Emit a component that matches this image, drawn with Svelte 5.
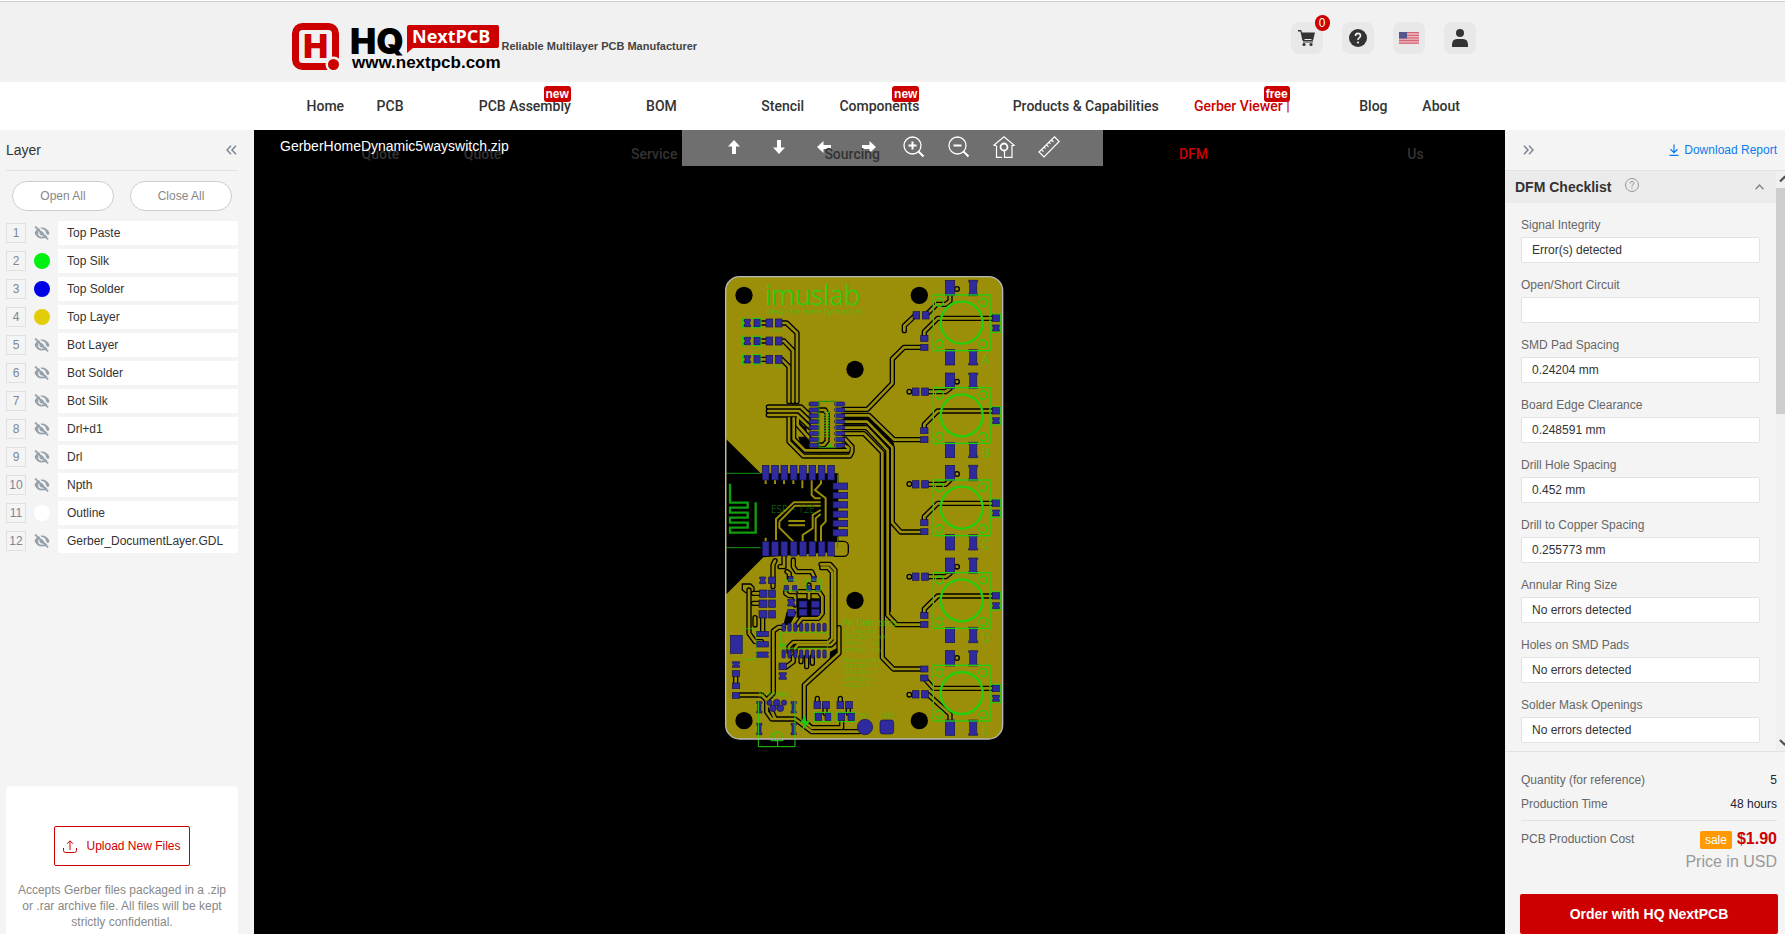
<script>
    let layers = [
        { name: 'Top Paste' },
        { name: 'Top Silk', color: '#00f010' },
        { name: 'Top Solder', color: '#0000e6' },
        { name: 'Top Layer', color: '#e3cd09' },
        { name: 'Bot Layer' },
        { name: 'Bot Solder' },
        { name: 'Bot Silk' },
        { name: 'Drl+d1' },
        { name: 'Drl' },
        { name: 'Npth' },
        { name: 'Outline', color: '#ffffff' },
        { name: 'Gerber_DocumentLayer.GDL' }
    ];

    let menu = [
        { first: 'Home' },
        { first: 'PCB', second: 'Quote' },
        { first: 'PCB Assembly', second: 'Quote', tag: 'new' },
        { first: 'BOM', second: 'Service' },
        { first: 'Stencil' },
        { first: 'Components', second: 'Sourcing', tag: 'new' },
        { first: 'Products & Capabilities' },
        { first: 'Gerber Viewer |', second: 'DFM', tag: 'free', active: true },
        { first: 'Blog' },
        { first: 'About', second: 'Us' }
    ];

    let checks = [
        { label: 'Signal Integrity', value: 'Error(s) detected' },
        { label: 'Open/Short Circuit', value: '' },
        { label: 'SMD Pad Spacing', value: '0.24204 mm' },
        { label: 'Board Edge Clearance', value: '0.248591 mm' },
        { label: 'Drill Hole Spacing', value: '0.452 mm' },
        { label: 'Drill to Copper Spacing', value: '0.255773 mm' },
        { label: 'Annular Ring Size', value: 'No errors detected' },
        { label: 'Holes on SMD Pads', value: 'No errors detected' },
        { label: 'Solder Mask Openings', value: 'No errors detected' }
    ];

    // board drawing, 3 units per screen pixel
    const holes = [[87, 91], [613, 91], [420, 313], [420, 1006], [87, 1367], [613, 1367]];
    const keys = [
        { y: 0, name: 'A' },
        { y: 278, name: 'B' },
        { y: 555, name: 'C' },
        { y: 833, name: 'D' },
        { y: 1111, name: 'E' }
    ];
    const ledRows = [174, 228, 283];
    const eight = [0, 1, 2, 3, 4, 5, 6, 7];

    // isolated copper runs, drawn dark first and then filled
    const traces = [
        'M617 247H567L532 282V355L457 433H385',
        'M617 524H537L462 451H385',
        'M617 801H557L532 773V547L456 470H385',
        'M617 1079H545L518 1050V555L455 488H385',
        'M617 1212H535L502 1178V562L447 506H385',
        'M705 90V108L692 118H665L640 143',
        'M600 152L568 182V197',
        'M137 174H153M137 228H153M137 283H153',
        'M200 174H215L246 204V410',
        'M200 228H207L234 256V410',
        'M200 283L222 305V410',
        'M160 426H258L285 452',
        'M160 438H252L285 470',
        'M160 450H246L285 488',
        'M222 460V530L265 573H405L411 560V545L390 522',
        'M236 460V522L270 556H400V548L385 540',
        'M248 460V480L285 522',
        'M312 435H330L336 446V528L326 540H312',
        // below the module
        'M207 873V905H195',
        'M180 887L174 900V965',
        'M235 885V905L245 920H290L297 935',
        'M223 940V925L216 920',
        'M320 908H340L352 922V1120L340 1132H235L222 1145V1160',
        'M318 898H345L360 915V1128L348 1140H248L240 1150V1160',
        'M212 975V985L222 992H240V1020',
        'M252 980H312L322 995V1045L310 1060H260L245 1080',
        'M282 960V1000',
        'M102 975V1105L120 1130H140',
        'M115 985H145M115 1015H145M120 1058V1080',
        'M143 1055V1100',
        'M205 1087H190L175 1098V1285L155 1305V1340L170 1362H240L290 1400H432L450 1386',
        'M75 1290H140L155 1305L180 1360',
        'M372 1088V1165L268 1260V1370L290 1388H380V1365',
        'M62 1235V1260',
        'M235 1175V1190L215 1205H205',
        'M258 1175V1190M275 1175V1205M292 1175V1195',
        'M307 1300V1310M376 1300V1310M330 1320V1345M400 1320V1345'
    ];

    const keyTraces = [
        'M628 215V200L668 160H845',
        'M628 493V478L668 438H845',
        'M628 770V755L668 715H845',
        'M628 1048V1032L668 993H845',
        'M628 1240L655 1270H845',
        'M705 370L692 380H635',
        'M705 645L692 658H635',
        'M705 925L692 935H635',
        'M640 1289L705 1348V1365'
    ];
    const runs = [...keyTraces, ...traces];

    // [x, y, width, height]
    const pads = [
        [594, 140, 20, 22], [622, 140, 20, 22],
        [592, 369, 20, 22], [620, 369, 20, 22],
        [592, 647, 20, 22], [620, 647, 20, 22],
        [592, 924, 20, 22], [620, 924, 20, 22],
        [592, 1277, 20, 22], [620, 1277, 20, 22],
        [617, 211, 22, 18], [617, 238, 22, 18],
        [617, 488, 22, 18], [617, 515, 22, 18],
        [617, 764, 22, 18], [617, 791, 22, 18],
        [617, 1042, 22, 18], [617, 1069, 22, 18],
        [617, 1203, 22, 18], [617, 1230, 22, 18],
        [161, 936, 20, 20],
        [134, 975, 22, 22], [161, 975, 20, 22],
        [132, 1005, 24, 22], [161, 1005, 20, 22],
        [132, 1037, 24, 22], [161, 1037, 20, 22],
        [220, 934, 14, 16], [207, 962, 13, 16], [233, 962, 13, 16],
        [289, 934, 14, 16], [276, 962, 13, 16], [302, 962, 13, 16],
        [218, 1034, 22, 20],
        [252, 1008, 24, 20], [252, 1032, 24, 20],
        [289, 1008, 24, 20], [289, 1032, 24, 20],
        [46, 1111, 36, 54],
        [124, 1099, 36, 16], [124, 1130, 36, 16],
        [52, 1217, 22, 17], [52, 1254, 22, 17], [52, 1283, 22, 17],
        [192, 1194, 22, 20],
        [297, 1309, 20, 22], [323, 1309, 20, 22], [366, 1309, 20, 22], [392, 1309, 20, 22],
        [300, 1344, 20, 22], [330, 1344, 20, 22], [369, 1344, 20, 22], [399, 1344, 20, 22]
    ];

    // pads tied to the copper pour, with cut corners
    const tied = [
        [134, 936, 18, 20],
        [218, 1003, 22, 20],
        [124, 1161, 36, 16],
        [52, 1190, 22, 17],
        [192, 1223, 22, 20],
        [125, 1310, 16, 34], [228, 1310, 16, 34], [125, 1375, 16, 34], [228, 1375, 16, 34],
        ...ledRows.map((y) => [87, y - 11, 20, 22]),
        ...keys.flatMap((key) => [
            [761, key.y + 46, 27, 46],
            [761, key.y + 254, 27, 46],
            [832, key.y + 180, 22, 18]
        ])
    ];

    function cutPad([x, y, w, h]) {
        return `M${x} ${y}h${w}v5l-3 3v${h - 16}l3 3v5h-${w}v-5l3-3v-${h - 16}l-3-3z`;
    }

    const notes = [
        [1103, 'LED Strip Signal'],
        [1122, 'GPIO12(D6) -> DATA'],
        [1141, 'GPIO5(D1) -> SCL'],
        [1160, 'GPIO4(D2) -> SDA'],
        [1190, '(Button Input Pin)'],
        [1209, 'GPIO13(D7) -> A'],
        [1228, 'GPIO12(D6) -> B'],
        [1247, 'GPIO14(D5) -> C'],
        [1266, 'ADC(A0) -> E']
    ];
</script>

<div class="page">
    <header>
        <div class="container head">
            <a class="brand" href="/" aria-label="HQ NextPCB">
                <svg width="210" height="50" viewBox="0 0 210 50">
                    <rect x="3.5" y="5.500" width="40" height="40" rx="7" fill="none" stroke="#c00" stroke-width="7" />
                    <text x="23.500" y="37" class="heavy" font-size="33" text-anchor="middle" fill="#c00">H</text>
                    <circle cx="41.500" cy="43.500" r="8" fill="#f1f1f1" />
                    <circle cx="41.500" cy="43.500" r="5.500" fill="#c00" />
                    <text x="58" y="33" class="heavy" font-size="35">HQ</text>
                    <path d="M117 4h88q2 0 2 2v19q0 2-2 2h-84l-6 5V6q0-2 2-2z" fill="#c00" />
                    <text x="120" y="22" class="next" font-size="18" fill="#fff">NextPCB</text>
                    <text x="60" y="47" class="site" font-size="17">www.nextpcb.com</text>
                </svg>
                <span class="slogan">Reliable Multilayer PCB Manufacturer</span>
            </a>
            <div class="tools">
                <a class="tool" href="/cart" aria-label="Cart">
                    <svg width="18" height="18" viewBox="0 0 18 18" fill="#333">
                        <path d="M0 1h3.200l.8 2.500h13l-1.800 7.500q-.3 1-1.200 1H5.500q-1 0-1.200-1L2.400 2.400H0z" />
                        <path d="M5 13h10" stroke="#333" />
                        <circle cx="6" cy="15.500" r="1.600" /><circle cx="13" cy="15.500" r="1.600" />
                        <path d="M6.500 10.500h7" stroke="#e8e8e8" />
                    </svg>
                    <span class="count">0</span>
                </a>
                <a class="tool" href="/help" aria-label="Help">
                    <svg width="18" height="18" viewBox="0 0 18 18">
                        <circle cx="9" cy="9" r="9" fill="#333" />
                        <path d="M6.500 7q0-2.600 2.500-2.600T11.500 6.800q0 1.200-1.400 2Q9 9.500 9 11" fill="none" stroke="#f1f1f1" stroke-width="1.600" />
                        <circle cx="9" cy="13.500" r="1.100" fill="#f1f1f1" />
                    </svg>
                </a>
                <button class="tool" aria-label="Language">
                    <svg width="20" height="12" viewBox="0 0 20 12">
                        <rect width="20" height="12" fill="#e8bfc4" />
                        <path d="M0 .7h20M0 3.300h20M0 5.900h20M0 8.500h20M0 11.200h20" stroke="#d56573" stroke-width="1.300" />
                        <rect width="8" height="6.500" fill="#56568f" />
                    </svg>
                </button>
                <a class="tool" href="/account" aria-label="Account">
                    <svg width="18" height="18" viewBox="0 0 18 18" fill="#333">
                        <circle cx="9" cy="4" r="4" />
                        <path d="M1 18v-2q0-6 5-6h6q5 0 5 6v2z" />
                    </svg>
                </a>
            </div>
        </div>
    </header>

    <nav>
        <ul class="container">
            {#each menu as item}
                <li>
                    <a href="/" class:active={item.active}>
                        <span class="first">{item.first}{#if item.tag}<b class="tag">{item.tag}</b>{/if}</span>
                        {#if item.second}<span class="second">{item.second}</span>{/if}
                    </a>
                </li>
            {/each}
        </ul>
    </nav>

    <main>
        <aside class="left">
            <div class="panel-head">
                <span>Layer</span>
                <button class="plain" aria-label="Collapse layers">
                    <svg width="11" height="10" viewBox="0 0 11 10" fill="none" stroke="#7b8794" stroke-width="1.500"><path d="M5 .8L1 5l4 4.200M10 .8L6 5l4 4.200" /></svg>
                </button>
            </div>
            <div class="pills">
                <button>Open All</button>
                <button>Close All</button>
            </div>
            <ol>
                {#each layers as layer, index}
                    <li>
                        <span class="num">{index + 1}</span>
                        <button class="plain eye" aria-label="Toggle {layer.name}">
                            {#if layer.color}
                                <span class="dot" style="background:{layer.color}"></span>
                            {:else}
                                <svg width="16" height="14" viewBox="0 0 16 14" fill="none" stroke="#96a0aa">
                                    <path d="M.5 7Q3 1.500 8 1.500T15.500 7Q13 12.500 8 12.500T.5 7z" fill="#96a0aa" stroke="none" />
                                    <circle cx="8" cy="7" r="3.200" stroke="#f4f4f4" stroke-width="1.300" />
                                    <path d="M3-.7L15.500 11.800" stroke="#f4f4f4" stroke-width="1.500" />
                                    <path d="M1.200.5L14 13.300" stroke-width="1.800" />
                                </svg>
                            {/if}
                        </button>
                        <span class="layer-name">{layer.name}</span>
                    </li>
                {/each}
            </ol>
            <div class="upload">
                <button>
                    <svg width="14" height="13" viewBox="0 0 14 13" fill="none" stroke="#c00"><path d="M.5 8v2.500q0 2 2 2h9q2 0 2-2V8M7 10V1M4 3.800L7 .8l3 3" /></svg>
                    Upload New Files
                </button>
                <p>Accepts Gerber files packaged in a .zip or .rar archive file. All files will be kept strictly confidential.</p>
            </div>
        </aside>

        <section class="viewer">
            <div class="bar">
                <span class="file">GerberHomeDynamic5wayswitch.zip</span>
                <div class="actions">
                    <button class="plain" aria-label="Move up"><svg width="12" height="14" viewBox="0 0 12 14" fill="#fff"><path d="M6 0l6 6.500H8V14H4V6.500H0z" /></svg></button>
                    <button class="plain" aria-label="Move down"><svg width="12" height="14" viewBox="0 0 12 14" fill="#fff"><path d="M6 14l6-6.500H8V0H4v7.500H0z" /></svg></button>
                    <button class="plain" aria-label="Move left"><svg width="14" height="12" viewBox="0 0 14 12" fill="#fff"><path d="M0 6l6.500-6v4H14v4H6.500v4z" /></svg></button>
                    <button class="plain" aria-label="Move right"><svg width="14" height="12" viewBox="0 0 14 12" fill="#fff"><path d="M14 6L7.500 0v4H0v4h7.500v4z" /></svg></button>
                    <button class="plain" aria-label="Zoom in"><svg width="22" height="22" viewBox="0 0 22 22" fill="none" stroke="#fff"><circle cx="9.500" cy="9.500" r="8.500" stroke-width="1.300" /><path d="M5.500 9.500h8M9.500 5.500v8M15.500 15.500l5 5" stroke-width="2" /></svg></button>
                    <button class="plain" aria-label="Zoom out"><svg width="22" height="22" viewBox="0 0 22 22" fill="none" stroke="#fff"><circle cx="9.500" cy="9.500" r="8.500" stroke-width="1.300" /><path d="M5.500 9.500h8M15.500 15.500l5 5" stroke-width="2" /></svg></button>
                    <button class="plain" aria-label="Fit board"><svg width="22" height="22" viewBox="0 0 22 22" fill="none" stroke="#fff" stroke-width="1.200"><path d="M.5 9.500L11 .8l10.500 8.700h-2.500V21.400h-7.500V15M3 9.500H.5M3.500 9.500v11.900H9" /><circle cx="11" cy="11" r="3.500" stroke-width="1.800" /></svg></button>
                    <button class="plain" aria-label="Measure"><svg width="22" height="22" viewBox="0 0 22 22" fill="none" stroke="#fff" stroke-width="1.200"><path d="M1 16L16.500.8l4.700 4.700L6 21zM3.500 13.600l2 2M6 11.200l1.500 1.500M8.500 8.800l2 2M11 6.400l1.500 1.500M13.400 4l2 2" /></svg></button>
                </div>
            </div>

            <div class="stage">
                <svg class="board" width="300" height="490" viewBox="0 0 900 1470" role="img" aria-label="Board preview">
                    <rect x="32" y="35" width="831" height="1387" rx="42" fill="#9b8e08" />
                    <path d="M34 523L137 625H370V860L145 877L34 988z" />
                    <path d="M250 515H285V560H262zM245 1000h72v58h-72zM215 1040h30l-20 40h-20zM345 1160l28-15V1165l-30 35z" />
                    <path d="M385 476H455L525 547V1040M385 460H458L534 535V540M250 470l22 24v-20l-20-16M228 310V410M241 300V410M229 462V525" fill="none" stroke="#000" stroke-width="6" />
                    <path d="M317 548V565M82 957H107L117 967V983H92L82 975z" fill="none" stroke="#000" stroke-width="4" />

                    <g fill="none" stroke-linecap="round" stroke-linejoin="round">
                        {#each runs as d}<path {d} stroke="#000" stroke-width="16" />{/each}
                        {#each runs as d}<path {d} stroke="#9b8e08" stroke-width="8" />{/each}
                    </g>

                    <g fill="none" stroke="#9b8e08" stroke-width="6">
                        <path d="M183 825V762L237 712H317M193 770V788L235 830M193 770L240 722H317M220 768H270M220 781H270" />
                        <path d="M290 645V690L300 700H317M318 645V655L300 675L332 700V770L318 784V830M317 735L293 750V790L263 810V830M317 747L302 760V830" />
                        <path d="M152 645v12M180 645v12M207 645v12M235 645v12M262 645v25M152 830v-12" />
                    </g>
                    <rect x="350" y="829" width="50" height="45" rx="14" fill="#9b8e08" stroke="#000" stroke-width="4" />

                    {#each holes as [x, y]}<circle cx={x} cy={y} r="26" />{/each}

                    <g fill="none" stroke="#000" stroke-width="4">
                        {#each keys as key}
                            {#if key.name !== 'A'}<circle cx="583" cy={key.name === 'E' ? 1289 : key.y + 102} r="7" />{/if}
                            {#if key.y < 1111 || key.name === 'E'}<circle cx="726" cy={key.y + (key.name === 'E' ? 68 : 72)} r="7" />{/if}
                        {/each}
                    </g>

                    <g fill="#2f2b9e" stroke="#15134c" stroke-width="2">
                        {#each tied as pad}<path d={cutPad(pad)} />{/each}
                        {#each pads as [x, y, w, h]}<rect {x} {y} width={w} height={h} />{/each}
                        {#each ledRows as y}
                            <rect x="117" y={y - 12} width="20" height="24" />
                            <rect x="153" y={y - 12} width="20" height="24" />
                            <rect x="181" y={y - 12} width="20" height="24" />
                        {/each}
                        {#each eight as i}
                            <rect x="282" y={411 + i * 17.7} width="30" height="12" rx="4" />
                            <rect x="359" y={411 + i * 17.7} width="30" height="12" rx="4" />
                            <rect x={142 + i * 28} y="601" width="20" height="44" />
                            <rect x={142 + i * 28} y="830" width="20" height="43" />
                            <rect x={201 + i * 17.5} y="1075" width="10" height="24" rx="3" />
                            <rect x={201 + i * 17.5} y="1155" width="10" height="24" rx="3" />
                            {#if i < 6}<rect x="354" y={654 + i * 28} width="44" height="19" />{/if}
                        {/each}
                        {#each keys as key}
                            <rect x="691" y={key.y + 46} width="28" height="46" />
                            <rect x="691" y={key.y + 254} width="28" height="46" />
                            <rect x="832" y={key.y + 149} width="22" height="20" />
                        {/each}
                        <circle cx="450" cy="1386" r="23" />
                        <rect x="495" y="1365" width="41" height="42" rx="8" />
                        <circle cx="163" cy="1313" r="8" /><circle cx="185" cy="1313" r="10" /><circle cx="207" cy="1313" r="8" />
                        <circle cx="174" cy="1330" r="10" /><circle cx="196" cy="1330" r="10" />
                    </g>

                    <g fill="none" stroke="#22d010" stroke-width="4">
                        {#each keys as key}
                            <rect x="655" y={key.y + 90} width="170" height="167" />
                            <circle cx="740" cy={key.y + 173} r="63" stroke-width="7" />
                            <circle cx="673" cy={key.y + 112} r="12" />
                            <circle cx="804" cy={key.y + 112} r="12" />
                            <circle cx="673" cy={key.y + 237} r="12" />
                            <circle cx="804" cy={key.y + 237} r="12" />
                            <path d="M832 {key.y + 147}h24v30M830 {key.y + 180}v22h26v-22" stroke-width="3" />
                        {/each}
                        {#each ledRows as y}<path d="M90 {y - 14}h-8v28h8M110 {y - 14}h28v28h-28" stroke-width="3" />{/each}
                        <path d="M312 409h50v139h-50zM34 625H137M34 848H137M368 628V655M368 815V848" stroke="#12960f" stroke-width="3" />
                        <path d="M330 440V520M340 440V520" stroke-dasharray="4 4" />
                        <path d="M45 656V713H98V728H45V743H98V758H45V773H98V788H45V803H122V712" stroke="#0ea00c" stroke-width="7" />
                        <path d="M197 1102H338V1150H197zM85 1091H123V1184H85zM206 945v32h42v-32zM275 945v32h42v-32z" stroke-width="2" />
                        <path d="M130 1445V1310M240 1310V1445H130M168 1427V1412L178 1402H195L204 1412V1427H168M180 1402V1427H188V1443" stroke-width="3" />
                        <path d="M297 1342h53v28h-53zM366 1342h55v28h-55z" stroke-width="3" />
                    </g>
                    <path d="M270 1350L255 1375H265L262 1397L285 1368H273z" fill="#1ec80e" />
                    <circle cx="346" cy="541" r="5" fill="#1ec80e" /><circle cx="205" cy="1140" r="5" fill="#1ec80e" />

                    <g class="silk" fill="#2bcf14">
                        <text x="150" y="119" font-size="81" stroke="#2bcf14" stroke-width="1">imuslab</text>
                        <text x="154" y="146" font-size="22">Design for Home Dynamic v3</text>
                        {#each keys as key}<text x="800" y={key.y + 297} font-size="37">{key.name}</text>{/each}
                        <text x="168" y="744" font-size="30" fill="#0c830b">ESP – 12E</text>
                        <text x="384" y="1083" font-size="25">Pin Definitions</text>
                        {#each notes as [y, note]}<text x="386" {y} font-size="14">{note}</text>{/each}
                        <text x="130" y="1295" font-size="19">5V  POWER</text>
                        <text x="434" y="1359" font-size="19">5V</text>
                        <text x="496" y="1359" font-size="19">GND</text>
                        {#each ledRows as y}<text x="172" y={y + 27} font-size="13">470R</text>{/each}
                    </g>
                    <rect x="32" y="35" width="831" height="1387" rx="42" fill="none" stroke="#b9b9b9" stroke-width="4" />
                </svg>
            </div>
        </section>

        <aside class="right">
            <div class="report">
                <button class="plain" aria-label="Collapse checklist">
                    <svg width="11" height="10" viewBox="0 0 11 10" fill="none" stroke="#7b8794" stroke-width="1.500"><path d="M1 .8L5 5 1 9.200M6 .8L10 5 6 9.200" /></svg>
                </button>
                <a href="/report">
                    <svg width="10" height="12" viewBox="0 0 10 12" fill="none" stroke="#0a7cf0" stroke-width="1.200"><path d="M5 .5v8M1.500 5.200L5 8.600l3.500-3.400M.5 11.300h9" /></svg>
                    Download Report
                </a>
            </div>
            <div class="scroll">
                <div class="checks">
                    <h2>
                        DFM Checklist
                        <svg class="hint" width="14" height="14" viewBox="0 0 14 14" fill="none" stroke="#999"><circle cx="7" cy="7" r="6.500" /><path d="M5 5.500Q5 3.500 7 3.500t2 1.800Q9 6.300 7 7.500v1.200M7 9.700v1.200" /></svg>
                        <svg class="fold" width="9" height="6" viewBox="0 0 9 6" fill="none" stroke="#7b8794" stroke-width="1.400"><path d="M.6 5.200L4.500 1l3.900 4.200" /></svg>
                    </h2>
                    {#each checks as check, index}
                        <div class="field">
                            <label for="check-{index}">{check.label}</label>
                            <input id="check-{index}" type="text" value={check.value} readonly />
                        </div>
                    {/each}
                </div>
                <div class="track">
                    <svg width="9" height="17" viewBox="0 0 9 17" fill="none" stroke="#505050" stroke-width="2.200"><path d="M4 10.500L8.500 6l4 4" /></svg>
                    <div class="thumb"></div>
                    <svg width="9" height="17" viewBox="0 0 9 17" fill="none" stroke="#505050" stroke-width="2.200"><path d="M4 6l4.500 4.500 4-4" /></svg>
                </div>
            </div>
            <div class="summary">
                <dl>
                    <div><dt>Quantity (for reference)</dt><dd>5</dd></div>
                    <div><dt>Production Time</dt><dd>48 hours</dd></div>
                    <div class="cost">
                        <dt>PCB Production Cost</dt>
                        <dd><span class="sale">sale</span><strong>$1.90</strong><small>Price in USD</small></dd>
                    </div>
                </dl>
                <button class="order">Order with HQ NextPCB</button>
            </div>
        </aside>
    </main>
</div>

<style>
    :global(body) {
        background: #fff;
        font-family: "Liberation Sans", Arial, sans-serif;
        font-size: 12px;
        color: #333;
    }
    .page {
        height: 100vh;
        display: flex;
        flex-direction: column;
        overflow: hidden;
    }
    a {
        color: inherit;
        text-decoration: none;
    }
    button, input {
        font: inherit;
        color: inherit;
    }
    button {
        cursor: pointer;
    }
    svg {
        flex: none;
        display: block;
    }
    ul, ol {
        list-style: none;
        margin: 0;
        padding: 0;
    }
    .plain {
        display: flex;
        align-items: center;
        justify-content: center;
        padding: 0;
        border: none;
        background: none;
    }
    .container {
        width: 100%;
        max-width: 1202px;
        margin: 0 auto;
        box-sizing: border-box;
    }

    header {
        margin-top: 1px;
        border-top: 1px solid #ccc;
        background: #f1f1f1;
    }
    .head {
        display: flex;
        justify-content: space-between;
        align-items: flex-start;
        padding: 19px 18px 11px 0;
    }
    .brand {
        display: flex;
        align-items: center;
    }
    .heavy {
        font-family: Inter, sans-serif;
        font-weight: 900;
    }
    .next {
        font-family: "Open Sans", sans-serif;
        font-weight: 700;
    }
    .site {
        font-weight: 700;
    }
    .slogan {
        font-size: 11px;
        font-weight: 700;
        color: #444;
    }
    .tools {
        display: flex;
        gap: 19px;
        padding-top: 1px;
    }
    .tool {
        position: relative;
        display: flex;
        align-items: center;
        justify-content: center;
        width: 32px;
        height: 32px;
        padding: 0;
        border: none;
        border-radius: 8px;
        background: #e8e8e8;
    }
    .count {
        position: absolute;
        top: -7px;
        right: -7px;
        width: 15px;
        height: 16px;
        line-height: 16px;
        border-radius: 8px;
        background: #c00;
        color: #fff;
        text-align: center;
    }

    nav {
        position: relative;
        z-index: 2;
        height: 48px;
        background: #fff;
    }
    nav ul {
        display: grid;
        grid-template-columns: 70fr 102fr 167fr 115fr 78fr 173fr 181fr 165fr 63fr 86fr;
    }
    nav li {
        font-family: Roboto, sans-serif;
        font-size: 14px;
        font-weight: 500;
        line-height: 48px;
        white-space: nowrap;
        height: 48px;
    }
    nav a {
        display: block;
    }
    .active {
        color: #c00;
    }
    .first {
        position: relative;
        margin-left: 15px;
    }
    .second {
        display: block;
    }
    .tag {
        position: absolute;
        top: -12px;
        right: 0;
        padding: 0 2px;
        border-radius: 3px;
        background: #c00;
        color: #fff;
        font: bold 12px/16px "Liberation Sans", sans-serif;
    }

    main {
        flex: 1;
        min-height: 0;
        display: flex;
    }
    .left {
        flex: none;
        width: 254px;
        box-sizing: border-box;
        padding: 0 16px 0 6px;
        display: flex;
        flex-direction: column;
        background: #f4f4f4;
    }
    .panel-head {
        display: flex;
        justify-content: space-between;
        align-items: center;
        height: 40px;
        padding-right: 1px;
        border-bottom: 1px solid #e2e2e2;
        font-size: 14px;
    }
    .pills {
        display: flex;
        gap: 16px;
        padding: 10px 6px;
    }
    .pills button {
        flex: 1;
        height: 30px;
        border: 1px solid #ccc;
        border-radius: 15px;
        background: #fff;
        color: #888;
    }
    ol {
        display: grid;
        gap: 4px;
    }
    ol li {
        display: flex;
        align-items: center;
        gap: 8px;
        height: 24px;
    }
    .num {
        width: 18px;
        height: 18px;
        line-height: 18px;
        border: 1px solid #e0e0e0;
        text-align: center;
        color: #7b8794;
    }
    .eye {
        width: 16px;
    }
    .dot {
        width: 16px;
        height: 16px;
        border-radius: 50%;
    }
    .layer-name {
        flex: 1;
        padding-left: 9px;
        line-height: 24px;
        background: #fff;
    }
    .upload {
        margin-top: auto;
        padding: 40px 10px 4px;
        border-radius: 4px 4px 0 0;
        background: #fff;
        text-align: center;
    }
    .upload button {
        display: inline-flex;
        align-items: center;
        gap: 9px;
        height: 40px;
        padding: 0 8px;
        border: 1px solid #c00;
        border-radius: 2px;
        background: #fff;
        color: #c00;
    }
    .upload p {
        margin: 16px 0 0;
        line-height: 16px;
        color: #888;
    }

    .viewer {
        flex: 1;
        min-width: 0;
        display: flex;
        flex-direction: column;
        background: #000;
    }
    .bar {
        display: grid;
        grid-template-columns: 428fr 421fr 402fr;
    }
    .file {
        position: relative;
        z-index: 3;
        padding-left: 26px;
        line-height: 32px;
        font-size: 14px;
        color: #fff;
    }
    .actions {
        display: flex;
        padding: 0 31px 3px 29px;
        height: 36px;
        box-sizing: border-box;
        background: #6f6f6f;
    }
    .actions button {
        flex: 1;
    }
    .stage {
        flex: 1;
        display: flex;
        align-items: center;
        justify-content: center;
        padding: 0 30px 80px 0;
    }
    .silk {
        font-family: "Open Sans", sans-serif;
        font-weight: 300;
        white-space: pre;
    }

    .right {
        flex: none;
        width: 280px;
        display: flex;
        flex-direction: column;
        background: #f4f4f4;
    }
    .report {
        display: flex;
        justify-content: space-between;
        align-items: center;
        height: 40px;
        padding: 0 8px 0 18px;
        border-bottom: 1px solid #e2e2e2;
    }
    .report a {
        display: flex;
        align-items: center;
        gap: 5px;
        color: #0a7cf0;
    }
    .scroll {
        flex: 1;
        min-height: 0;
        display: flex;
        overflow: hidden;
    }
    .checks {
        flex: 1;
    }
    h2 {
        display: flex;
        align-items: center;
        height: 32px;
        margin: 0 0 15px;
        padding: 0 12px 0 10px;
        background: #ebebeb;
        font-size: 14px;
    }
    .hint {
        margin: 0 0 4px 14px;
    }
    .fold {
        margin-left: auto;
    }
    .field {
        padding: 0 16px;
        height: 60px;
    }
    .field label {
        display: block;
        line-height: 14px;
        padding-bottom: 5px;
        color: #666;
    }
    .field input {
        width: 100%;
        height: 26px;
        box-sizing: border-box;
        padding: 0 10px;
        border: 1px solid #e2e2e2;
        border-radius: 2px;
        background: #fff;
        outline: none;
    }
    .track {
        flex: none;
        width: 9px;
        display: flex;
        flex-direction: column;
        background: #f0f0f0;
    }
    .thumb {
        height: 39%;
        margin-bottom: auto;
        background: #cdcdcd;
    }
    .summary {
        padding: 16px 7px 0 15px;
        border-top: 1px solid #e2e2e2;
    }
    dl {
        margin: 0 1px;
    }
    dl div {
        display: flex;
        justify-content: space-between;
        line-height: 24px;
    }
    dt {
        color: #666;
    }
    dd {
        margin: 0;
        color: #223;
    }
    dl .cost {
        margin-top: 4px;
        padding: 6px 0 22px;
        border-top: 1px solid #e2e2e2;
    }
    .cost dd {
        text-align: right;
    }
    .sale {
        display: inline-block;
        margin-right: 5px;
        padding: 0 5px;
        line-height: 18px;
        border-radius: 2px;
        background: #f90;
        color: #fff;
    }
    strong {
        font-size: 16px;
        color: #c00;
    }
    small {
        display: block;
        font-size: 16px;
        line-height: 20px;
        color: #999;
    }
    .order {
        width: 100%;
        height: 40px;
        border: none;
        border-radius: 2px;
        background: #c00;
        color: #fff;
        font-size: 14px;
        font-weight: 700;
    }
</style>
